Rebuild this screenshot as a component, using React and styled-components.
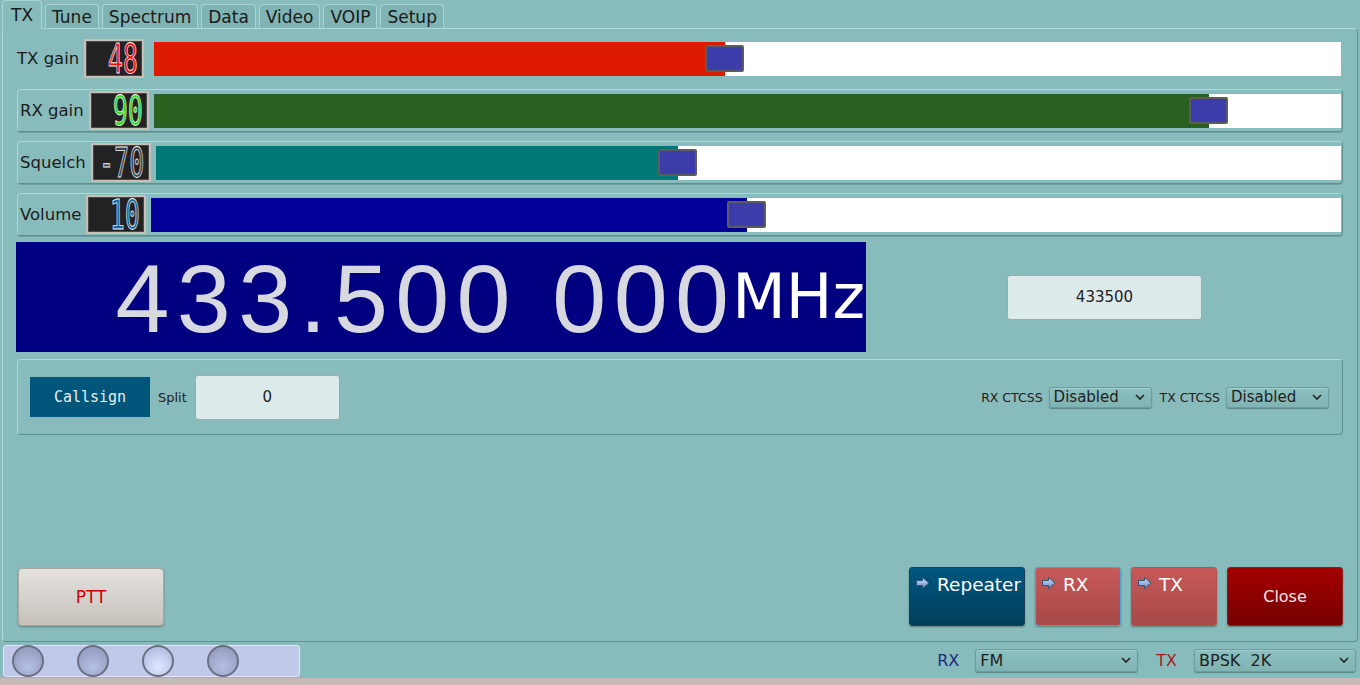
import React from 'react'
import styled, { createGlobalStyle } from 'styled-components'

const GlobalStyle = createGlobalStyle`
  html, body {
    margin: 0;
    padding: 0;
    background: #88bbbb;
  }
  body {
    font-family: "DejaVu Sans", "Noto Sans", sans-serif;
    overflow: hidden;
  }
`

const Window = styled.div`
  width: 1360px;
  height: 685px;
  display: flex;
  flex-direction: column;
  background: #88bbbb;
`

const TabBar = styled.div`
  display: flex;
  align-items: flex-end;
  gap: 3px;
  height: 28px;
  padding-left: 2px;
  position: relative;
  z-index: 1;
`

const Tab = styled.div`
  box-sizing: border-box;
  height: ${p => (p.$active ? 29 : 24)}px;
  padding: 0 ${p => (p.$active ? 8 : 6)}px;
  margin-bottom: ${p => (p.$active ? -1 : 0)}px;
  display: flex;
  align-items: center;
  border: 1px solid #a9d4d4;
  border-bottom: none;
  border-radius: 4px 4px 0 0;
  background: ${p => (p.$active ? '#88bbbb' : '#80b3b3')};
  font-size: 17px;
  color: #1a1a1a;
`

const Panel = styled.div`
  box-sizing: border-box;
  height: 614px;
  margin: 0 2px;
  border: 1px solid;
  border-color: #a9d6d6 #5f9292 #5f9292 #a9d6d6;
  border-radius: 0 4px 4px 4px;
  padding: 8px 14px 15px 14px;
  display: flex;
  flex-direction: column;
`

const Sliders = styled.div`
  display: flex;
  flex-direction: column;
  gap: 9px;
`

const SliderRow = styled.div`
  box-sizing: border-box;
  height: 43px;
  display: flex;
  align-items: center;
  gap: 5px;
  padding: 0 1px 0 2px;
  margin-left: ${p => (p.$plain ? -3 : 0)}px;
  border: 1px solid;
  border-color: ${p => (p.$plain ? 'transparent' : '#aadada #5e8f8f #5e8f8f #aadada')};
  border-radius: 4px;
  box-shadow: ${p => (p.$plain ? 'none' : '0 1px 0 #6f9f9f')};
`

const RowLabel = styled.span`
  font-size: 16.5px;
  color: #1c1c1c;
  white-space: nowrap;
`

const Lcd = styled.div`
  box-sizing: border-box;
  width: 60px;
  height: 39px;
  flex: none;
  margin-right: ${p => p.$extra || 0}px;
  background: #222222;
  border: 2px solid #c4c0b8;
  box-shadow: inset 0 0 0 1px #4a4a4a;
  display: flex;
  align-items: center;
  justify-content: flex-end;
  padding-right: 4px;
`

const LcdDigits = styled.span`
  font-family: "DejaVu Sans Mono", monospace;
  font-size: 34px;
  line-height: 26px;
  height: 26px;
  color: ${p => p.$color};
  display: inline-block;
  transform: scale(0.74, 1.2);
  transform-origin: right center;
  -webkit-text-stroke: 0.7px #f2f2f2;
`

const Track = styled.div`
  flex: 1;
  height: 34px;
  background: #ffffff;
  position: relative;
`

const Fill = styled.div`
  height: 100%;
  background: ${p => p.$color};
`

const Handle = styled.div`
  position: absolute;
  top: 3px;
  box-sizing: border-box;
  width: 39px;
  height: 27px;
  background: #3c3cab;
  border: 2px solid #5c5c62;
  border-radius: 2px;
`

const FreqRow = styled.div`
  display: flex;
  align-items: center;
  margin-top: 6px;
  margin-left: -1px;
`

const FreqDisplay = styled.div`
  box-sizing: border-box;
  width: 850px;
  height: 110px;
  background: #000080;
  display: flex;
  align-items: center;
  justify-content: flex-end;
  overflow: hidden;
`

const FreqDigits = styled.span`
  font-family: "Liberation Sans", Arial, sans-serif;
  font-size: 97px;
  letter-spacing: 7.4px;
  line-height: 1;
  color: #d8d8e0;
  margin-top: 2px;
`

const FreqUnit = styled.span`
  font-family: "DejaVu Sans", sans-serif;
  font-size: 62px;
  line-height: 1;
  color: #ffffff;
  margin-left: -4px;
  margin-right: 1px;
`

const FreqSide = styled.div`
  flex: 1;
  display: flex;
  justify-content: center;
`

const TextBox = styled.div`
  box-sizing: border-box;
  width: ${p => p.$w}px;
  height: ${p => p.$h}px;
  background: #dceaea;
  border: 1px solid #98adad;
  border-radius: 3px;
  display: flex;
  align-items: center;
  justify-content: center;
  font-size: 15px;
  color: #222;
`

const GroupBox = styled.div`
  box-sizing: border-box;
  height: 76px;
  margin-top: 7px;
  border: 1px solid;
  border-color: #aadada #5e8f8f #5e8f8f #aadada;
  border-radius: 4px;
  padding: 0 13px 0 12px;
  display: flex;
  align-items: center;
`

const CallsignButton = styled.div`
  width: 120px;
  height: 40px;
  background: #00557b;
  color: #e6eef2;
  font-family: "DejaVu Sans Mono", monospace;
  font-size: 15px;
  display: flex;
  align-items: center;
  justify-content: center;
  margin-right: 8px;
`

const SmallLabel = styled.span`
  font-size: ${p => p.$size || 13}px;
  color: ${p => p.$color || '#222'};
  margin-right: ${p => p.$gap || 8}px;
  white-space: nowrap;
`

const Spacer = styled.div`
  flex: 1;
`

const Combo = styled.div`
  box-sizing: border-box;
  width: ${p => p.$w}px;
  height: ${p => p.$h || 21}px;
  margin-right: ${p => p.$mr || 0}px;
  display: flex;
  align-items: center;
  justify-content: space-between;
  padding: 0 6px 0 4px;
  background: linear-gradient(#8cbfbf, #80b3b3);
  border: 1px solid #6c9c9c;
  border-radius: 3px;
  box-shadow: 0 1px 1px rgba(40, 80, 80, 0.5), inset 0 1px 0 #a2d0d0;
  font-size: ${p => p.$font || 15}px;
  color: #1e1e1e;
  white-space: pre;
`

const ButtonRow = styled.div`
  display: flex;
  align-items: flex-end;
  gap: 10px;
  padding-left: 1px;
`

const PttButton = styled.div`
  box-sizing: border-box;
  width: 146px;
  height: 58px;
  background: linear-gradient(#e4e2de, #c6c1bb);
  border: 1px solid #aaa59e;
  border-radius: 4px;
  box-shadow: 0 1px 2px rgba(0, 0, 0, 0.3);
  display: flex;
  align-items: center;
  justify-content: center;
  color: #cc0000;
  font-size: 17px;
`

const ActionButton = styled.div`
  box-sizing: border-box;
  width: ${p => p.$w}px;
  height: 59px;
  background: ${p => p.$bg};
  border: 1px solid ${p => p.$border};
  border-radius: 3px;
  box-shadow: 0 1px 2px rgba(0, 0, 0, 0.35);
  color: #ffffff;
  display: flex;
  align-items: ${p => (p.$center ? 'center' : 'flex-start')};
  justify-content: ${p => (p.$center ? 'center' : 'flex-start')};
  gap: 7px;
  padding: ${p => (p.$center ? '0' : '6px 4px 0 6px')};
  font-size: ${p => (p.$center ? 16 : 18.5)}px;
`

const StatusBar = styled.div`
  height: 36px;
  display: flex;
  align-items: center;
  padding: 0 4px 0 3px;
`

const LedFrame = styled.div`
  box-sizing: border-box;
  width: 297px;
  height: 32px;
  margin-top: 2px;
  background: #c0c9ea;
  border: 1px solid #e2e7fb;
  border-radius: 3px;
  display: flex;
  align-items: center;
  gap: 33px;
  padding-left: 8px;
`

const Led = styled.div`
  box-sizing: border-box;
  width: 32px;
  height: 32px;
  border-radius: 50%;
  border: 2px solid #6b6f80;
  background: ${p =>
    p.$on
      ? 'radial-gradient(circle at 50% 70%, #e0e7ff, #a9b3da)'
      : 'radial-gradient(circle at 50% 70%, #b5bfe4, #8c95b6)'};
`

const BottomStrip = styled.div`
  height: 7px;
  background: #c4bab6;
`

const Arrow = () => (
  <svg width="14" height="12" viewBox="0 0 14 12" style={{ flex: 'none', marginTop: 3 }}>
    <defs>
      <linearGradient id="arr" x1="0" y1="0" x2="0" y2="1">
        <stop offset="0" stopColor="#d6e6f8" />
        <stop offset="1" stopColor="#5f8cc4" />
      </linearGradient>
    </defs>
    <polygon points="0.5,3.5 6.5,3.5 6.5,0.5 13,6 6.5,11.5 6.5,8.5 0.5,8.5" fill="url(#arr)" stroke="#34527c" strokeWidth="1" />
  </svg>
)

const Chevron = () => (
  <svg width="10" height="6" viewBox="0 0 10 6">
    <polyline points="1,1 5,5 9,1" fill="none" stroke="#222" strokeWidth="1.6" />
  </svg>
)

const Slider = ({ label, value, lcdColor, color, frac, plain, extra }) => (
  <SliderRow $plain={plain}>
    <RowLabel>{label}</RowLabel>
    <Lcd $extra={extra}>
      <LcdDigits $color={lcdColor}>{value}</LcdDigits>
    </Lcd>
    <Track>
      <Fill $color={color} style={{ width: `${frac * 100}%` }} />
      <Handle style={{ left: `calc(${frac * 100}% - 20px)` }} />
    </Track>
  </SliderRow>
)

const Select = ({ value, ...rest }) => (
  <Combo {...rest}>
    <span>{value}</span>
    <Chevron />
  </Combo>
)

export default function App() {
  const tabs = ['TX', 'Tune', 'Spectrum', 'Data', 'Video', 'VOIP', 'Setup']
  return (
    <Window>
      <GlobalStyle />
      <TabBar>
        {tabs.map((t, i) => (
          <Tab key={t} $active={i === 0}>{t}</Tab>
        ))}
      </TabBar>
      <Panel>
        <Sliders>
          <Slider plain extra={5} label="TX gain" value="48" lcdColor="#ee1111" color="#dd1a00" frac={0.481} />
          <Slider label="RX gain" value="90" lcdColor="#22dd22" color="#2a6120" frac={0.889} />
          <Slider label="Squelch" value="-70" lcdColor="#3a4652" color="#007878" frac={0.4405} />
          <Slider label="Volume" value="10" lcdColor="#1a6a9a" color="#000099" frac={0.501} />
        </Sliders>
        <FreqRow>
          <FreqDisplay>
            <FreqDigits>433.500 000</FreqDigits>
            <FreqUnit>MHz</FreqUnit>
          </FreqDisplay>
          <FreqSide>
            <TextBox $w={195} $h={45}>433500</TextBox>
          </FreqSide>
        </FreqRow>
        <GroupBox>
          <CallsignButton>Callsign</CallsignButton>
          <SmallLabel>Split</SmallLabel>
          <TextBox $w={145} $h={45}>0</TextBox>
          <Spacer />
          <SmallLabel $size={12.5} $gap={6}>RX CTCSS</SmallLabel>
          <Select value="Disabled" $w={103} $mr={8} />
          <SmallLabel $size={12.5} $gap={6}>TX CTCSS</SmallLabel>
          <Select value="Disabled" $w={103} />
        </GroupBox>
        <Spacer />
        <ButtonRow>
          <PttButton>PTT</PttButton>
          <Spacer />
          <ActionButton $w={116} $bg="linear-gradient(#00577f, #003e5b)" $border="#1b3e55">
            <Arrow />
            <span>Repeater</span>
          </ActionButton>
          <ActionButton $w={86} $bg="linear-gradient(#c75858, #a84949)" $border="#4aa2d4">
            <Arrow />
            <span>RX</span>
          </ActionButton>
          <ActionButton $w={86} $bg="linear-gradient(#c75858, #a84949)" $border="#b65252">
            <Arrow />
            <span>TX</span>
          </ActionButton>
          <ActionButton $w={116} $center $bg="linear-gradient(#a40000, #760000)" $border="#8a2020">
            <span style={{ color: '#f2e4e4' }}>Close</span>
          </ActionButton>
        </ButtonRow>
      </Panel>
      <StatusBar>
        <LedFrame>
          <Led />
          <Led />
          <Led $on />
          <Led />
        </LedFrame>
        <Spacer />
        <SmallLabel $size={16} $color="#1c2a80" $gap={16}>RX</SmallLabel>
        <Select value="FM" $w={163} $h={23} $font={16} $mr={18} />
        <SmallLabel $size={16} $color="#aa1a1a" $gap={17}>TX</SmallLabel>
        <Select value="BPSK  2K" $w={162} $h={23} $font={16} />
      </StatusBar>
      <BottomStrip />
    </Window>
  )
}
